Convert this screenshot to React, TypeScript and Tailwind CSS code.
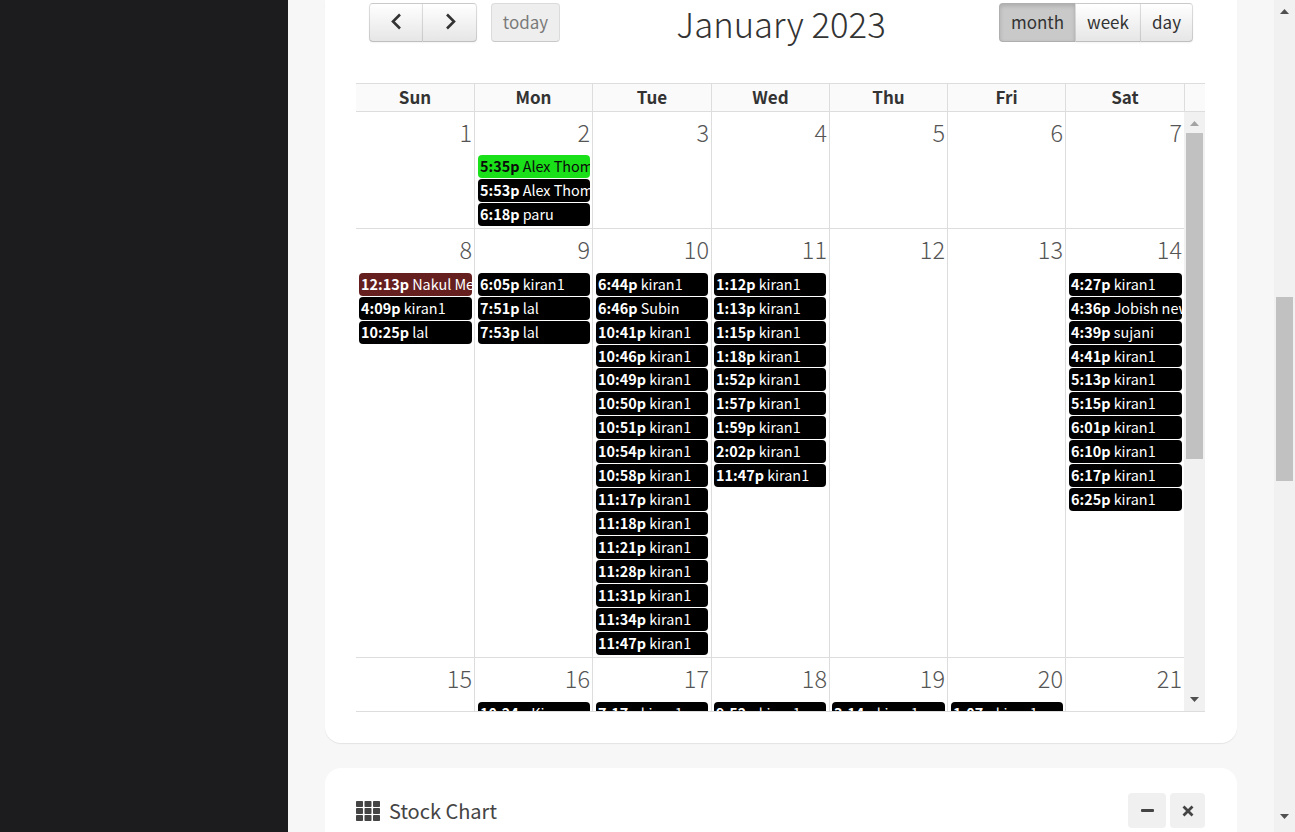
const font = { fontFamily: '"Noto Sans CJK SC", "Noto Sans", sans-serif' };

type Ev = [string, string, string?];

const k = (t: string): Ev => [t, "kiran1"];

const rows: { day: number; events: Ev[] }[][] = [
  [
    { day: 1, events: [] },
    {
      day: 2,
      events: [
        ["5:35p", "Alex Thomas", "green"],
        ["5:53p", "Alex Thomas"],
        ["6:18p", "paru"],
      ],
    },
    { day: 3, events: [] },
    { day: 4, events: [] },
    { day: 5, events: [] },
    { day: 6, events: [] },
    { day: 7, events: [] },
  ],
  [
    {
      day: 8,
      events: [["12:13p", "Nakul Menon", "brown"], k("4:09p"), ["10:25p", "lal"]],
    },
    { day: 9, events: [k("6:05p"), ["7:51p", "lal"], ["7:53p", "lal"]] },
    {
      day: 10,
      events: [
        k("6:44p"),
        ["6:46p", "Subin"],
        k("10:41p"),
        k("10:46p"),
        k("10:49p"),
        k("10:50p"),
        k("10:51p"),
        k("10:54p"),
        k("10:58p"),
        k("11:17p"),
        k("11:18p"),
        k("11:21p"),
        k("11:28p"),
        k("11:31p"),
        k("11:34p"),
        k("11:47p"),
      ],
    },
    {
      day: 11,
      events: [
        k("1:12p"),
        k("1:13p"),
        k("1:15p"),
        k("1:18p"),
        k("1:52p"),
        k("1:57p"),
        k("1:59p"),
        k("2:02p"),
        k("11:47p"),
      ],
    },
    { day: 12, events: [] },
    { day: 13, events: [] },
    {
      day: 14,
      events: [
        k("4:27p"),
        ["4:36p", "Jobish new"],
        ["4:39p", "sujani"],
        k("4:41p"),
        k("5:13p"),
        k("5:15p"),
        k("6:01p"),
        k("6:10p"),
        k("6:17p"),
        k("6:25p"),
      ],
    },
  ],
  [
    { day: 15, events: [] },
    { day: 16, events: [["10:24p", "Kiran"]] },
    { day: 17, events: [k("7:17p")] },
    { day: 18, events: [k("9:52p")] },
    { day: 19, events: [k("3:14p")] },
    { day: 20, events: [k("1:07p")] },
    { day: 21, events: [] },
  ],
];

const gaps = [
  "ml-[3px] mr-[2px]",
  "ml-[3px] mr-[2px]",
  "ml-[3px] mr-[3px]",
  "ml-[2px] mr-[3px]",
  "ml-[2px] mr-[2px]",
  "ml-[3px] mr-[2px]",
  "ml-[3px] mr-[2px]",
];

function Event({ ev, col }: { ev: Ev; col: number }) {
  const tone =
    ev[2] === "green"
      ? "bg-[#19e019] text-[#0b0b0b]"
      : ev[2] === "brown"
        ? "bg-[#651f1f] text-white"
        : "bg-black text-white";
  return (
    <div
      className={`mb-px h-[22.93px] overflow-hidden whitespace-nowrap rounded-[4px] pl-[2px] text-[14.4px] leading-[21px] ${gaps[col]} ${tone}`}
    >
      <b className="font-bold">{ev[0]}</b> {ev[1]}
    </div>
  );
}

function Row({ cells, h, head, last }: { cells: (typeof rows)[0]; h: string; head: string; last?: boolean }) {
  return (
    <div
      className={`grid grid-cols-[119px_118px_119px_118px_118px_118px_118px] overflow-hidden ${h} ${last ? "" : "border-b border-[#ddd]"}`}
    >
      {cells.map((c, i) => (
        <div key={c.day} className={`min-w-0 ${i < 6 ? "border-r border-[#ddd]" : ""}`}>
          <div
            className={`${head} pr-[2px] pt-[3px] text-right text-[23.5px] font-extralight leading-[34px] text-[#555]`}
          >
            {c.day}
          </div>
          {c.events.map((e) => (
            <Event key={e[0] + e[1]} ev={e} col={i} />
          ))}
        </div>
      ))}
    </div>
  );
}

function Caret({ up, cls }: { up?: boolean; cls: string }) {
  return (
    <svg width="9" height="5" viewBox="0 0 9 5" className={cls}>
      <path d={up ? "M4.5 0 9 5H0z" : "M0 0h9L4.5 5z"} fill="currentColor" />
    </svg>
  );
}

const btn =
  "flex h-[39px] items-center justify-center border border-[#00000020] border-b-[#00000040] bg-gradient-to-b from-white to-[#e6e6e6] pb-[2px] text-[17px] shadow-[0_1px_2px_rgba(0,0,0,0.05)]";

function Chevron({ left }: { left?: boolean }) {
  return (
    <svg width="18" height="19" viewBox="0 0 18 19">
      <path
        d={left ? "M13 2.5 6 9.5l7 7" : "M6 2.5l7 7-7 7"}
        fill="none"
        stroke="#333"
        strokeWidth="2.6"
      />
    </svg>
  );
}

export default function App() {
  return (
    <div className="flex h-[832px] overflow-hidden bg-[#f7f7f7] text-[#333]" style={font}>
      <aside className="w-[288px] shrink-0 bg-[#1c1c1e]" />
      <main className="min-w-0 flex-1 px-[37px]">
        <section className="rounded-b-[16px] bg-white pb-[31px] pl-[31px] pr-[32px] pt-[3px] shadow-[0_1px_1px_rgba(0,0,0,0.08)]">
          <div className="grid h-[80px] grid-cols-[1fr_auto_1fr] items-start px-[13px] pr-[12px]">
            <div className="flex gap-[14px]">
              <div className="flex">
                <button className={`${btn} w-[54px] rounded-l-[4px]`}>
                  <Chevron left />
                </button>
                <button className={`${btn} -ml-px w-[55px] rounded-r-[4px]`}>
                  <Chevron />
                </button>
              </div>
              <button className="flex h-[39px] w-[69px] items-center justify-center rounded-[4px] border border-[#00000020] border-b-[#00000040] bg-[#e6e6e6] pb-[2px] text-[17px] opacity-65">
                today
              </button>
            </div>
            <h2 className="-mt-[2px] text-center text-[34.7px] font-light leading-[44px]">January 2023</h2>
            <div className="flex justify-end">
              <button className="flex h-[39px] w-[77px] items-center justify-center rounded-l-[4px] border border-[#00000020] bg-[#c9c9c9] pb-[2px] text-[17px] shadow-[inset_0_2px_4px_rgba(0,0,0,0.15)]">
                month
              </button>
              <button className={`${btn} -ml-px w-[66px]`}>week</button>
              <button className={`${btn} -ml-px w-[53px] rounded-r-[4px]`}>day</button>
            </div>
          </div>

          <div className="flex h-[29px] border-y border-[#ddd] bg-[#fafafa]">
            <div className="grid w-[829px] grid-cols-[119px_118px_119px_118px_118px_118px_119px]">
              {["Sun", "Mon", "Tue", "Wed", "Thu", "Fri", "Sat"].map((d) => (
                <div key={d} className="border-r border-[#ddd] text-center text-[17px] font-bold leading-[25px]">
                  {d}
                </div>
              ))}
            </div>
          </div>

          <div className="flex h-[600px] border-b border-[#ddd]">
            <div className="w-[828px] shrink-0 overflow-hidden">
              <Row cells={rows[0]} h="h-[117px]" head="h-[43px]" />
              <Row cells={rows[1]} h="h-[429px]" head="h-[43.8px]" />
              <Row cells={rows[2]} h="h-[53px]" head="h-[44px]" last />
            </div>
            <div className="flex flex-1 flex-col items-center bg-[#f1f1f1]">
              <Caret up cls="mt-[9px] text-[#a3a3a3]" />
              <div className="mt-[7px] h-[326px] w-[17px] bg-[#c1c1c1]" />
              <Caret cls="mt-[238px] text-[#505050]" />
            </div>
          </div>
        </section>

        <section className="mt-[25px] flex h-[80px] items-start justify-between rounded-t-[16px] bg-white pl-[31px] pr-[32px] pt-[25px]">
          <div className="flex items-center gap-[9px]">
            <svg width="24" height="21" viewBox="0 0 24 21" fill="#444">
              {[0, 7, 14].map((y) =>
                [0, 8.5, 17].map((x) => <rect key={`${x}-${y}`} x={x} y={y} width="7" height="6" rx="0.8" />),
              )}
            </svg>
            <span className="text-[20px] leading-[36px] text-[#444]">Stock Chart</span>
          </div>
          <div className="flex gap-[4px]">
            <button className="flex h-[35px] w-[38px] items-center justify-center rounded-[4px] bg-[#f0f0f0]">
              <span className="h-[3px] w-[13px] rounded-[1px] bg-[#444]" />
            </button>
            <button className="flex h-[35px] w-[35px] items-center justify-center rounded-[4px] bg-[#f0f0f0]">
              <svg width="12" height="12" viewBox="0 0 12 12">
                <path d="M1.5 1.5l9 9m0-9-9 9" stroke="#444" strokeWidth="2.8" />
              </svg>
            </button>
          </div>
        </section>
      </main>
      <div className="flex h-full w-[21px] shrink-0 flex-col items-center bg-[#f1f1f1]">
        <Caret up cls="mt-[9px] text-[#505050]" />
        <div className="mt-[283px] h-[184px] w-[17px] bg-[#c1c1c1]" />
        <Caret cls="mt-[333px] text-[#505050]" />
      </div>
    </div>
  );
}
